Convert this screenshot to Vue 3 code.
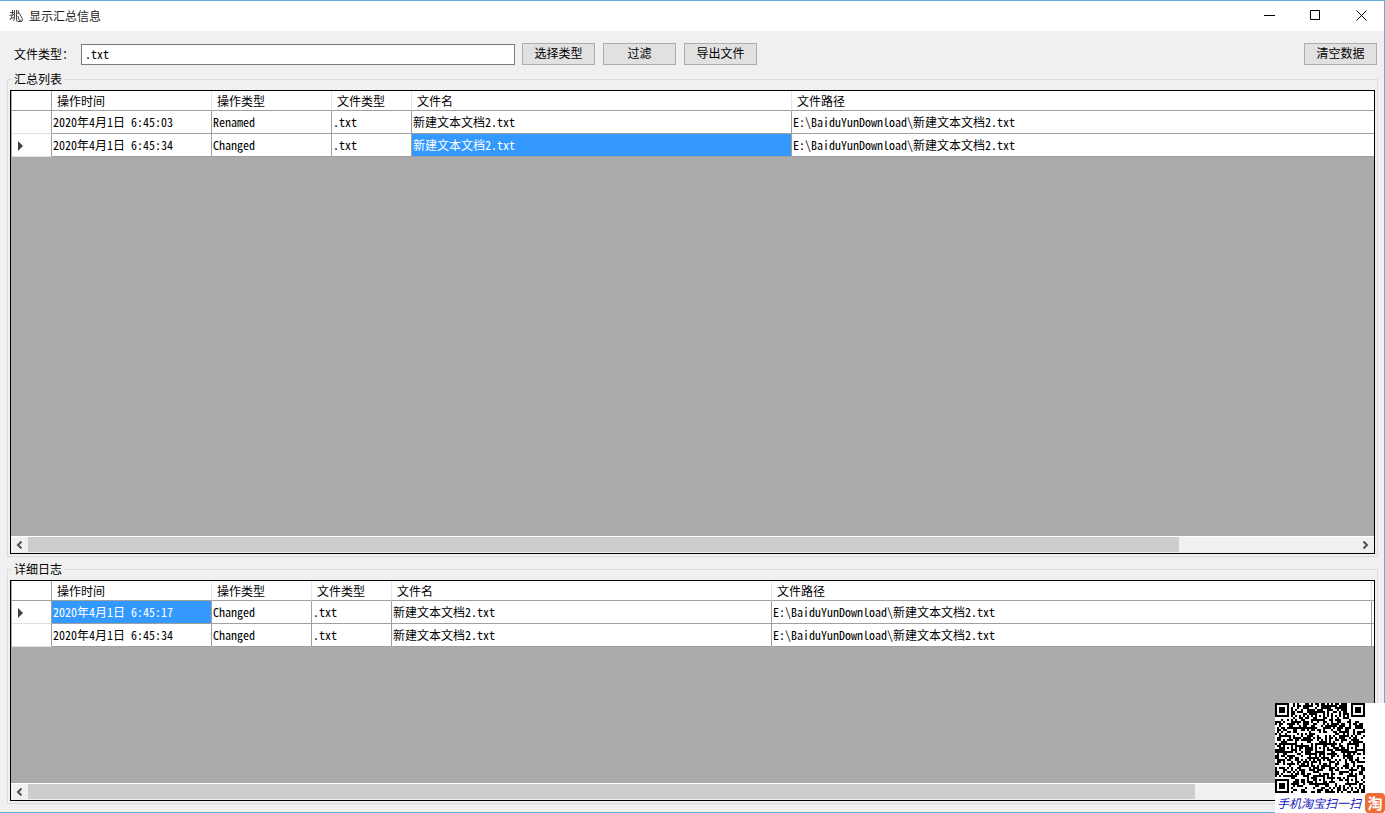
<script setup>
import { ref } from 'vue'

const fileType = ref('.txt')

const groups = [
  {
    id: 'summary',
    title: '汇总列表',
    columns: [
      { label: '操作时间', cls: 'w160' },
      { label: '操作类型', cls: 'w120' },
      { label: '文件类型', cls: 'w80' },
      { label: '文件名', cls: 'w380' },
      { label: '文件路径', cls: 'rest' },
    ],
    rows: [
      ['2020年4月1日 6:45:03', 'Renamed', '.txt', '新建文本文档2.txt', 'E:\\BaiduYunDownload\\新建文本文档2.txt'],
      ['2020年4月1日 6:45:34', 'Changed', '.txt', '新建文本文档2.txt', 'E:\\BaiduYunDownload\\新建文本文档2.txt'],
    ],
    current: 1,
    selected: 3,
    filler: false,
    thumb: 86.6,
  },
  {
    id: 'detail',
    title: '详细日志',
    columns: [
      { label: '操作时间', cls: 'w160' },
      { label: '操作类型', cls: 'w100' },
      { label: '文件类型', cls: 'w80' },
      { label: '文件名', cls: 'w380' },
      { label: '文件路径', cls: 'w600' },
    ],
    rows: [
      ['2020年4月1日 6:45:17', 'Changed', '.txt', '新建文本文档2.txt', 'E:\\BaiduYunDownload\\新建文本文档2.txt'],
      ['2020年4月1日 6:45:34', 'Changed', '.txt', '新建文本文档2.txt', 'E:\\BaiduYunDownload\\新建文本文档2.txt'],
    ],
    current: 0,
    selected: 0,
    filler: true,
    thumb: 87.8,
  },
]

// 45 x 45 module code: finders, timing lines, alignment marks and filled data area.
function buildCode() {
  const n = 45
  let seed = 20207
  const next = () => (seed = (seed * 1103515245 + 12345) % 2147483648) / 2147483648
  const grid = Array.from({ length: n }, () => Array.from({ length: n }, () => next() < 0.52))
  const mark = (cx, cy, r, dark) => {
    for (let y = -r; y <= r; y++) {
      for (let x = -r; x <= r; x++) {
        const gy = cy + y
        const gx = cx + x
        if (gy < 0 || gx < 0 || gy >= n || gx >= n) continue
        grid[gy][gx] = dark(Math.max(Math.abs(x), Math.abs(y)))
      }
    }
  }
  for (let i = 0; i < n; i++) {
    grid[6][i] = i % 2 === 0
    grid[i][6] = i % 2 === 0
  }
  for (const [x, y] of [[22, 6], [6, 22], [22, 22], [38, 22], [22, 38], [38, 38]]) mark(x, y, 2, (d) => d !== 1)
  for (const [x, y] of [[3, 3], [41, 3], [3, 41]]) mark(x, y, 4, (d) => d !== 2 && d !== 4)
  return grid.map((row, y) => row.map((on, x) => (on ? `M${x} ${y}h1v1h-1z` : '')).join('')).join('')
}
const codePath = buildCode()
</script>

<template>
  <div class="window">
    <header class="titlebar">
      <svg class="app-icon" viewBox="0 0 15 14" fill="none" stroke="#4a4a4a" aria-hidden="true">
        <path d="M1 3.500h5M.5 6.500l5-1M3.500 1v5l-2.500 5M5.500 1v8l-1 3M7.500 1v10l1 2M7 4.500l3-1M9 1l1 4M10 4l3 5 .5 3M9 7l1 4 3 1.500M2 9.500l3-1M9 12.500h4" />
      </svg>
      <h1>显示汇总信息</h1>
      <div class="window-buttons">
        <button type="button" aria-label="最小化">
          <svg viewBox="0 0 11 11"><path d="M0 5.500h11" /></svg>
        </button>
        <button type="button" aria-label="最大化">
          <svg viewBox="0 0 11 11"><path d="M.5 .5h9v9h-9z" /></svg>
        </button>
        <button type="button" aria-label="关闭">
          <svg viewBox="0 0 11 11"><path d="M.5 .5l10 10M10.500 .5l-10 10" /></svg>
        </button>
      </div>
    </header>

    <div class="toolbar">
      <label for="file-type">文件类型：</label>
      <input id="file-type" v-model="fileType" type="text" spellcheck="false" />
      <div class="actions">
        <button type="button">选择类型</button>
        <button type="button">过滤</button>
        <button type="button">导出文件</button>
      </div>
      <button type="button" class="clear">清空数据</button>
    </div>

    <main>
      <fieldset v-for="g in groups" :key="g.id" :class="g.id">
        <legend>{{ g.title }}</legend>
        <div class="grid">
          <div class="view">
            <table>
              <colgroup>
                <col class="w40" />
                <col v-for="(c, i) in g.columns" :key="i" :class="c.cls" />
                <col v-if="g.filler" />
              </colgroup>
              <thead>
                <tr>
                  <td class="row-head"></td>
                  <th v-for="c in g.columns" :key="c.label" scope="col">{{ c.label }}</th>
                  <td v-if="g.filler" class="filler"></td>
                </tr>
              </thead>
              <tbody>
                <tr v-for="(row, r) in g.rows" :key="r">
                  <td class="row-head"><span v-if="r === g.current" class="pointer"></span></td>
                  <td v-for="(cell, c) in row" :key="c" :class="{ selected: r === g.current && c === g.selected }">{{ cell }}</td>
                  <td v-if="g.filler" class="filler"></td>
                </tr>
              </tbody>
            </table>
          </div>
          <div class="scrollbar">
            <button type="button" aria-label="向左滚动">
              <svg viewBox="0 0 7 8"><path d="M5.500 .5L2 4l3.500 3.500" /></svg>
            </button>
            <div class="track"><div class="thumb" :style="{ width: g.thumb + '%' }"></div></div>
            <button type="button" aria-label="向右滚动">
              <svg viewBox="0 0 7 8"><path d="M1.500 .5L5 4l-3.500 3.500" /></svg>
            </button>
          </div>
        </div>
      </fieldset>
    </main>

    <aside class="code">
      <svg class="qr" viewBox="0 0 45 45" shape-rendering="crispEdges" role="img" aria-label="二维码">
        <path :d="codePath" />
      </svg>
      <div class="caption">
        <span>手机淘宝扫一扫</span>
        <b>淘</b>
      </div>
    </aside>
  </div>
</template>

<style>
body {
  margin: 0;
}
</style>

<style scoped>
.window {
  position: relative;
  box-sizing: border-box;
  min-height: 100vh;
  display: flex;
  flex-direction: column;
  background: #f0f0f0;
  border: solid #5fb0dc;
  border-width: 1px 1px 1px 0;
  color: #000;
  font: 12px/14px "Noto Sans CJK SC", sans-serif;
}
button,
input {
  box-sizing: border-box;
  margin: 0;
  font: inherit;
  color: inherit;
  border-radius: 0;
}
.titlebar {
  display: flex;
  align-items: center;
  height: 30px;
  padding-left: 9px;
  background: #fff;
}
.app-icon {
  width: 15px;
  height: 14px;
}
h1 {
  margin: 0 0 0 5px;
  font-size: 12px;
  font-weight: 400;
  color: #222;
}
.window-buttons {
  display: flex;
  align-self: flex-start;
  margin-left: auto;
}
.window-buttons button {
  width: 46px;
  height: 28px;
  padding: 0;
  border: 0;
  background: none;
  display: flex;
  align-items: center;
  justify-content: center;
}
.window-buttons svg {
  width: 11px;
  height: 11px;
  fill: none;
  stroke: #000;
}
.toolbar {
  display: flex;
  align-items: center;
  height: 22px;
  padding: 12px 7px 7px 14px;
}
.toolbar label {
  width: 67px;
}
.toolbar input {
  width: 434px;
  height: 21px;
  padding: 0 3px 2px;
  border: 1px solid #7a7a7a;
  background: #fff;
  font: 12px "Noto Sans Mono CJK SC", "Noto Sans CJK SC", monospace;
}
.actions {
  display: flex;
  gap: 8px;
  margin-left: 7px;
}
.toolbar button {
  width: 73px;
  height: 22px;
  padding: 0 0 2px;
  border: 1px solid #adadad;
  background: #e1e1e1;
}
.toolbar .clear {
  margin-left: auto;
}
main {
  flex: 1;
  display: flex;
  flex-direction: column;
  gap: 5px;
  padding: 0 6px 8px 7px;
}
fieldset {
  box-sizing: border-box;
  min-width: 0;
  margin: 0;
  padding: 3px 2px 2px;
  border: 1px solid #dcdcdc;
  display: flex;
  flex-direction: column;
}
.summary {
  flex: 478 1 0;
}
.detail {
  flex: 235 1 0;
}
legend {
  margin-left: 2px;
  padding: 0 2px;
  height: 15px;
}
.grid {
  flex: 1;
  min-height: 0;
  display: flex;
  flex-direction: column;
  border: 1px solid #000;
  background: #ababab;
}
.view {
  flex: 1;
  overflow: hidden;
  border-left: 1px solid #aaa;
}
table {
  width: 100%;
  table-layout: fixed;
  border-collapse: separate;
  border-spacing: 0;
  background: #fff;
}
.w40 { width: 40px; }
.w80 { width: 80px; }
.w100 { width: 100px; }
.w120 { width: 120px; }
.w160 { width: 160px; }
.w380 { width: 380px; }
.w600 { width: 600px; }
th,
td {
  box-sizing: border-box;
  height: 23px;
  padding: 0 1px;
  border: solid #a0a0a0;
  border-width: 0 1px 1px 0;
  font: 12px/14px "Noto Sans Mono CJK SC", "Noto Sans CJK SC", monospace;
  text-align: left;
  white-space: pre;
  overflow: hidden;
}
thead th,
thead td {
  height: 20px;
}
th {
  padding-left: 5px;
  border-right-color: #e5e5e5;
}
tbody .row-head {
  padding: 1px 0 0 6px;
  border-bottom-color: #e0e0e0;
}
.summary th:last-child,
.summary td:last-child,
.filler {
  border-right: 0;
}
.selected {
  background: #3399ff;
  color: #fff;
}
.pointer {
  display: block;
  width: 0;
  border: solid transparent;
  border-width: 5px 0 5px 5px;
  border-left-color: #404040;
}
.scrollbar {
  display: flex;
  height: 16px;
  border-top: 1px solid #fff;
  background: #f0f0f0;
}
.scrollbar button {
  width: 17px;
  padding: 0;
  border: 0;
  background: none;
  display: flex;
  align-items: center;
  justify-content: center;
}
.scrollbar svg {
  width: 7px;
  height: 8px;
  fill: none;
  stroke: #505050;
  stroke-width: 2;
}
.track {
  flex: 1;
}
.thumb {
  height: 15px;
  background: #cdcdcd;
}
/* Floats over the lower right corner of the window. */
.code {
  position: absolute;
  right: -1px;
  bottom: -1px;
  width: 110px;
  background: #fff;
}
.qr {
  display: block;
  width: 90px;
  height: 90px;
}
.caption {
  display: flex;
  align-items: center;
  justify-content: space-between;
  height: 20px;
  padding-left: 2px;
  color: #2020c0;
  font-size: 12px;
  font-style: italic;
  white-space: nowrap;
}
.caption b {
  width: 20px;
  height: 20px;
  border-radius: 4px;
  background: #f06a35;
  color: #fff;
  font-size: 15px;
  font-style: normal;
  line-height: 19px;
  text-align: center;
}
</style>
